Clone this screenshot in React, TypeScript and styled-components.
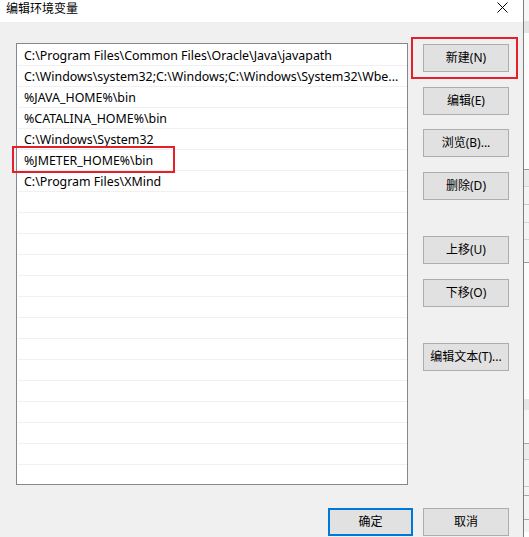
import React from 'react';
import styled, { createGlobalStyle } from 'styled-components';

const GlobalStyle = createGlobalStyle`
  html, body {
    margin: 0;
    padding: 0;
    background: #f0f0f0;
    overflow: hidden;
  }
  body {
    font-family: "Noto Sans", "Noto Sans CJK SC", sans-serif;
    color: #000;
  }
  * { box-sizing: border-box; }
`;

const Screen = styled.div`
  display: flex;
  width: 529px;
  height: 537px;
  overflow: hidden;
`;

const Dialog = styled.div`
  width: 523px;
  flex: none;
  display: flex;
  flex-direction: column;
  background: #f0f0f0;
`;

const TitleBar = styled.div`
  height: 22px;
  background: #ffffff;
  display: flex;
  align-items: flex-start;
  justify-content: space-between;
  padding-left: 6px;
`;

const Title = styled.span`
  font-family: "Noto Sans CJK SC", sans-serif;
  font-size: 12px;
  line-height: 16px;
  color: #000;
`;

const CloseIcon = styled.svg`
  width: 11px;
  height: 11px;
  margin: 2px 15px 0 0;
`;

const Body = styled.div`
  display: flex;
  flex-direction: column;
  padding: 21px 14px 0 16px;
`;

const Main = styled.div`
  display: flex;
  gap: 15px;
`;

const ListBox = styled.div`
  position: relative;
  width: 392px;
  height: 442px;
  border: 1px solid #828790;
  background: #ffffff;
`;

const Viewport = styled.div`
  height: 100%;
  overflow: hidden;
  padding: 1px 0 0 1px;
`;

const Row = styled.div`
  height: 21px;
  border-bottom: 1px solid #f0f0f0;
  padding: 1px 0 0 6px;
  font-size: 12.4px;
  line-height: 20px;
  white-space: nowrap;
  overflow: hidden;
`;

const Mark = styled.div<{ $left: number; $top: number; $w: number; $h: number }>`
  position: absolute;
  left: ${(p) => p.$left}px;
  top: ${(p) => p.$top}px;
  width: ${(p) => p.$w}px;
  height: ${(p) => p.$h}px;
  border: 2px solid #e6202a;
  pointer-events: none;
`;

const ButtonColumn = styled.div`
  display: flex;
  flex-direction: column;
  gap: 14.5px;
  padding-top: 1px;
`;

const ButtonWrap = styled.div`
  position: relative;
`;

const Button = styled.button<{ $spaced?: boolean; $primary?: boolean; $w?: number }>`
  width: ${(p) => p.$w ?? 86}px;
  height: 28px;
  margin: ${(p) => (p.$spaced ? '22px' : '0')} 0 0 0;
  padding: 0;
  background: #e1e1e1;
  border: ${(p) => (p.$primary ? '2px solid #0078d7' : '1px solid #adadad')};
  border-radius: 0;
  font-family: "Noto Sans", "Noto Sans CJK SC", sans-serif;
  font-size: 12px;
  line-height: 16px;
  color: #000;
  display: flex;
  align-items: center;
  justify-content: center;
`;

const Footer = styled.div`
  display: flex;
  justify-content: flex-end;
  gap: 10px;
  margin-top: 23px;
`;

const Strip = styled.div`
  flex: 1;
  border-left: 1px solid #7d7d7d;
  display: flex;
  flex-direction: column;
  background: #ffffff;
`;

const Seg = styled.div<{ $h: number; $bg?: string; $line?: string }>`
  height: ${(p) => p.$h}px;
  flex: none;
  background: ${(p) => p.$bg ?? '#ffffff'};
  border-bottom: ${(p) => (p.$line ? `1px solid ${p.$line}` : 'none')};
`;

const entries = [
  'C:\\Program Files\\Common Files\\Oracle\\Java\\javapath',
  'C:\\Windows\\system32;C:\\Windows;C:\\Windows\\System32\\Wbe...',
  '%JAVA_HOME%\\bin',
  '%CATALINA_HOME%\\bin',
  'C:\\Windows\\System32',
  '%JMETER_HOME%\\bin',
  'C:\\Program Files\\XMind',
];

const rows = [...entries, ...Array(14).fill('')];

const segs: { h: number; bg?: string; line?: string }[] = [
  { h: 21, bg: '#f7f7f7' },
  { h: 12, bg: '#e4e4e4' },
  { h: 137, bg: '#fcfcfc', line: '#9a9a9a' },
  { h: 17, bg: '#ececec', line: '#d4d4d4' },
  { h: 18, bg: '#f4f4f4', line: '#c8c8c8' },
  { h: 18, bg: '#f4f4f4', line: '#d4d4d4' },
  { h: 17, bg: '#f4f4f4', line: '#d4d4d4' },
  { h: 23, bg: '#f4f4f4', line: '#9a9a9a' },
  { h: 136, bg: '#fcfcfc' },
  { h: 11, bg: '#e6e6e6' },
  { h: 34, bg: '#f7f7f7', line: '#a8a8a8' },
  { h: 16, bg: '#ececec', line: '#c8c8c8' },
  { h: 27, bg: '#f4f4f4', line: '#c8c8c8' },
  { h: 9, bg: '#f4f4f4', line: '#a8a8a8' },
  { h: 24, bg: '#f4f4f4', line: '#a8a8a8' },
  { h: 12, bg: '#f4f4f4' },
];

export default function App() {
  return (
    <>
      <GlobalStyle />
      <Screen>
        <Dialog>
          <TitleBar>
            <Title>编辑环境变量</Title>
            <CloseIcon viewBox="0 0 11 11">
              <path d="M0.5 0.5 L10.5 10.5 M10.5 0.5 L0.5 10.5" stroke="#000" strokeWidth="1" fill="none" />
            </CloseIcon>
          </TitleBar>
          <Body>
            <Main>
              <ListBox>
                <Viewport>
                  {rows.map((t, i) => (
                    <Row key={i}>{t}</Row>
                  ))}
                </Viewport>
                <Mark $left={-5} $top={102} $w={163} $h={27} />
              </ListBox>
              <ButtonColumn>
                <ButtonWrap>
                  <Button>新建(N)</Button>
                  <Mark $left={-12} $top={-7} $w={107} $h={42} />
                </ButtonWrap>
                <Button>编辑(E)</Button>
                <Button>浏览(B)...</Button>
                <Button>删除(D)</Button>
                <Button $spaced>上移(U)</Button>
                <Button>下移(O)</Button>
                <Button $spaced>编辑文本(T)...</Button>
              </ButtonColumn>
            </Main>
            <Footer>
              <Button $primary $w={85}>确定</Button>
              <Button>取消</Button>
            </Footer>
          </Body>
        </Dialog>
        <Strip>
          {segs.map((s, i) => (
            <Seg key={i} $h={s.h} $bg={s.bg} $line={s.line} />
          ))}
        </Strip>
      </Screen>
    </>
  );
}
